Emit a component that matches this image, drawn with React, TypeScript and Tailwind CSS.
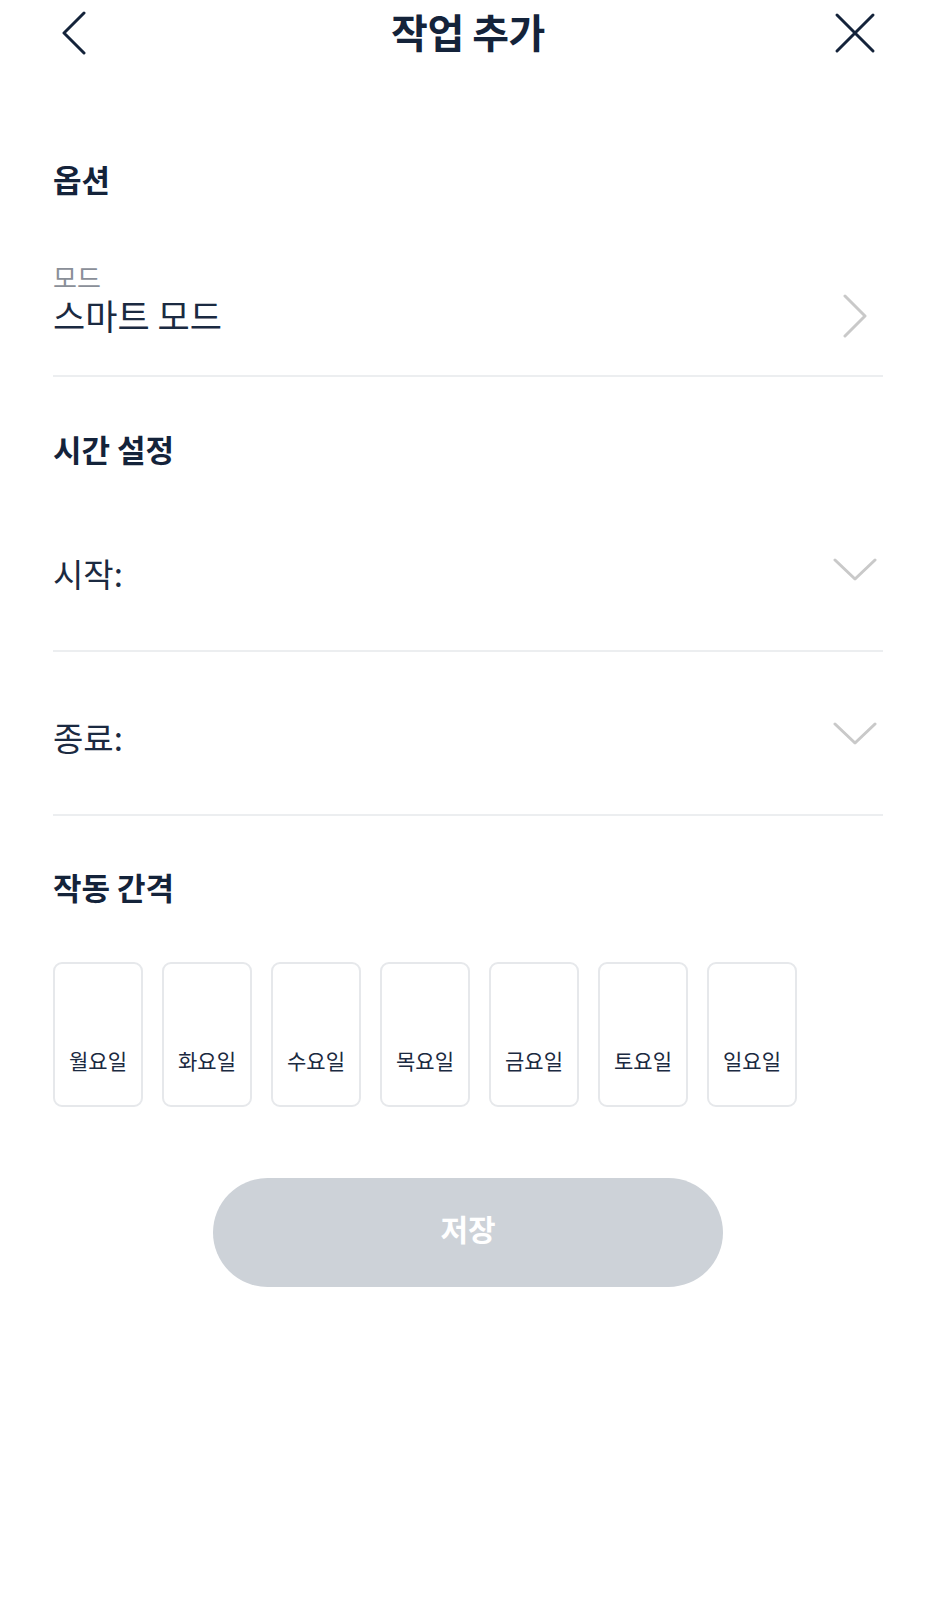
import React from "react"

const days = ["월요일", "화요일", "수요일", "목요일", "금요일", "토요일", "일요일"]

function ChevronDown() {
  return (
    <svg width="44" height="24" viewBox="0 0 44 24" fill="none">
      <path d="M2 2 L22 21 L42 2" stroke="#c9c9c9" strokeWidth="3" strokeLinecap="round" strokeLinejoin="round" />
    </svg>
  )
}

function TimeRow({ label }: { label: string }) {
  return (
    <div className="flex h-[164px] items-center justify-between border-b-2 border-[#eceef0] pt-[8px]">
      <span className="text-[33px] leading-[44px] text-[#1b2a41]">{label}</span>
      <span className="mr-[6px] -mt-[6px]">
        <ChevronDown />
      </span>
    </div>
  )
}

export default function App() {
  return (
    <div className="min-h-[1601px] bg-white px-[53px] font-['Noto_Sans_CJK_KR','Noto_Sans',sans-serif] text-[#14233a]">
      {/* Header */}
      <div className="grid h-[66px] grid-cols-[70px_1fr_70px] items-center">
        <div className="flex">
          <svg width="26" height="44" viewBox="0 0 26 44" fill="none" className="ml-[8px]">
            <path d="M23 2 L3 22 L23 42" stroke="#14233a" strokeWidth="3" strokeLinecap="round" strokeLinejoin="round" />
          </svg>
        </div>
        <h1 className="-mt-[4px] text-center text-[40px] font-bold leading-[48px] tracking-[-0.5px]">작업 추가</h1>
        <div className="flex justify-end">
          <svg width="44" height="44" viewBox="0 0 44 44" fill="none" className="mr-[6px]">
            <path d="M4 4 L40 40 M40 4 L4 40" stroke="#14233a" strokeWidth="3" strokeLinecap="round" />
          </svg>
        </div>
      </div>

      {/* 옵션 */}
      <h2 className="mt-[91px] text-[31px] font-bold leading-[44px]">옵션</h2>
      <div className="mt-[60px] flex items-end justify-between border-b-2 border-[#eceef0] pb-[38px]">
        <div className="flex flex-col">
          <span className="text-[26px] leading-[32px] text-[#8a8f98]">모드</span>
          <span className="text-[35px] leading-[44px] text-[#1b2a41]">스마트 모드</span>
        </div>
        <svg width="26" height="44" viewBox="0 0 26 44" fill="none" className="-mb-[1px] mr-[15px]">
          <path d="M3 2 L23 22 L3 42" stroke="#c9c9c9" strokeWidth="3" strokeLinecap="round" strokeLinejoin="round" />
        </svg>
      </div>

      {/* 시간 설정 */}
      <h2 className="mt-[50px] text-[31px] font-bold leading-[44px]">시간 설정</h2>
      <div className="mt-[17px]">
        <TimeRow label="시작:" />
        <TimeRow label="종료:" />
      </div>

      {/* 작동 간격 */}
      <h2 className="mt-[49px] text-[31px] font-bold leading-[44px]">작동 간격</h2>
      <div className="mt-[53px] flex gap-[19px]">
        {days.map((d) => (
          <div
            key={d}
            className="flex h-[145px] w-[90px] items-end justify-center rounded-[9px] border-2 border-[#e6e8eb] pb-[30px]"
          >
            <span className="text-[21px] leading-[30px] text-[#1b2a41]">{d}</span>
          </div>
        ))}
      </div>

      <div className="mt-[71px] flex justify-center">
        <button className="flex h-[109px] w-[510px] items-center justify-center rounded-full bg-[#cdd2d8] pb-[8px] text-[30px] font-bold text-white">
          저장
        </button>
      </div>
    </div>
  )
}
